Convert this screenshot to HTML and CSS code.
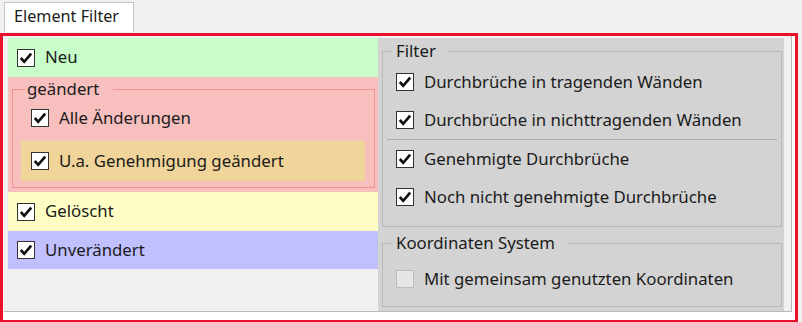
FILE: index.html
```html
<!DOCTYPE html>
<html lang="de">
<head>
    <meta charset="UTF-8">
    <title>Element Filter</title>
    <link rel="stylesheet" href="styles.css">
</head>
<body>
    <div class="tabstrip">
        <div class="tab">Element Filter</div>
    </div>
    <div class="frame">
        <div class="panel">
            <!-- left: change states -->
            <div class="states">
                <div class="row state-new">
                    <span class="cb checked"></span><span class="label">Neu</span>
                </div>
                <div class="state-changed">
                    <fieldset class="group group-red">
                        <legend>geändert</legend>
                        <div class="row sub">
                            <span class="cb checked"></span><span class="label">Alle Änderungen</span>
                        </div>
                        <div class="row sub approval">
                            <span class="cb checked"></span><span class="label">U.a. Genehmigung geändert</span>
                        </div>
                    </fieldset>
                </div>
                <div class="row state-deleted">
                    <span class="cb checked"></span><span class="label">Gelöscht</span>
                </div>
                <div class="row state-unchanged">
                    <span class="cb checked"></span><span class="label">Unverändert</span>
                </div>
            </div>

            <!-- right: filters -->
            <div class="filters">
                <fieldset class="group group-gray">
                    <legend>Filter</legend>
                    <div class="row opt">
                        <span class="cb checked"></span><span class="label">Durchbrüche in tragenden Wänden</span>
                    </div>
                    <div class="row opt">
                        <span class="cb checked"></span><span class="label">Durchbrüche in nichttragenden Wänden</span>
                    </div>
                    <div class="separator"></div>
                    <div class="row opt">
                        <span class="cb checked"></span><span class="label">Genehmigte Durchbrüche</span>
                    </div>
                    <div class="row opt">
                        <span class="cb checked"></span><span class="label">Noch nicht genehmigte Durchbrüche</span>
                    </div>
                </fieldset>
                <fieldset class="group group-gray coords">
                    <legend>Koordinaten System</legend>
                    <div class="row opt">
                        <span class="cb disabled"></span><span class="label">Mit gemeinsam genutzten Koordinaten</span>
                    </div>
                </fieldset>
            </div>
        </div>
    </div>
</body>
</html>
```

FILE: styles.css
```css
body {
    margin: 0;
    background-color: #f0f0f0;
    font-family: "Noto Sans", "Open Sans", sans-serif;
    font-size: 16.8px;
    color: #1b1b1b;
}
.tabstrip {
    height: 31px;
    padding-left: 4px;
}
.tab {
    box-sizing: border-box;
    width: 130px;
    height: 30px;
    margin-top: 2px;
    padding: 2px 0 0 9px;
    font-size: 16.2px;
    background-color: #fff;
    border: 1px solid #c4c4c4;
    border-bottom: none;
    position: relative;
    z-index: 1;
}
.frame {
    width: 790px;
    height: 282px;
    border: 3px solid #e8102a;
    padding: 0 2px 2px 0;
    background-color: #fff;
}
.panel {
    box-sizing: border-box;
    width: 789px;
    height: 276px;
    display: flex;
    padding: 2px 7px 0 4px;
    background-color: #f0f0f0;
    border-left: 1px solid #fff;
    border-right: 1px solid #b9b9b9;
    border-bottom: 1px solid #b9b9b9;
}
.states {
    width: 370px;
}
.filters {
    flex: 1;
    background-color: #d3d3d3;
    padding-top: 3px;
    height: 270px;
}
.row {
    display: flex;
    align-items: center;
    height: 38px;
}
.label {
    position: relative;
    top: -1px;
}
.cb {
    box-sizing: border-box;
    width: 18px;
    height: 18px;
    border: 1px solid #333;
    background-color: #fff;
    margin-right: 10px;
    flex: none;
}
.cb.checked {
    background-image: url("data:image/svg+xml,%3Csvg xmlns='http://www.w3.org/2000/svg' width='16' height='16'%3E%3Cpath d='M2.8 8 L6.2 11.8 L13.2 3.6' fill='none' stroke='%23111' stroke-width='2.7'/%3E%3C/svg%3E");
    background-repeat: no-repeat;
}
.cb.disabled {
    background-color: #e6e6e6;
    border-color: #bcbcbc;
}
.state-new {
    height: 39px;
    padding-left: 9px;
    background-color: #c8fcc8;
}
.state-changed {
    height: 115px;
    box-sizing: border-box;
    padding: 2px 3px 0 4px;
    background-color: #f8bfbf;
}
.state-deleted {
    height: 39px;
    padding-left: 9px;
    background-color: #fefec4;
}
.state-unchanged {
    padding-left: 9px;
    background-color: #c0c0fe;
}
.group {
    margin: 0;
    min-width: 0;
}
.group legend {
    line-height: 20px;
}
.group-red {
    border: 1px solid #f29393;
    padding: 0 9px 6px 8px;
}
.group-red legend {
    padding: 0 14px 0 2px;
    margin-left: 4px;
}
.group-red .sub {
    padding-left: 10px;
}
.group-red .approval {
    height: 40px;
    margin-top: 4px;
    background-color: #f0d49a;
}
.group-gray {
    border: 1px solid #b8b8b8;
    margin: 0 2px 0 4px;
    padding: 0 0 10px 13px;
}
.group-gray legend {
    padding: 0 12px 0 4px;
    margin-left: -4px;
}
.group-gray .opt:first-of-type {
    margin-top: 2px;
}
.separator {
    height: 1px;
    margin: 0 4px 0 -9px;
    background-color: #a9a9a9;
}
.coords {
    margin-top: 6px;
    padding-top: 5px;
    padding-bottom: 8px;
}
```
